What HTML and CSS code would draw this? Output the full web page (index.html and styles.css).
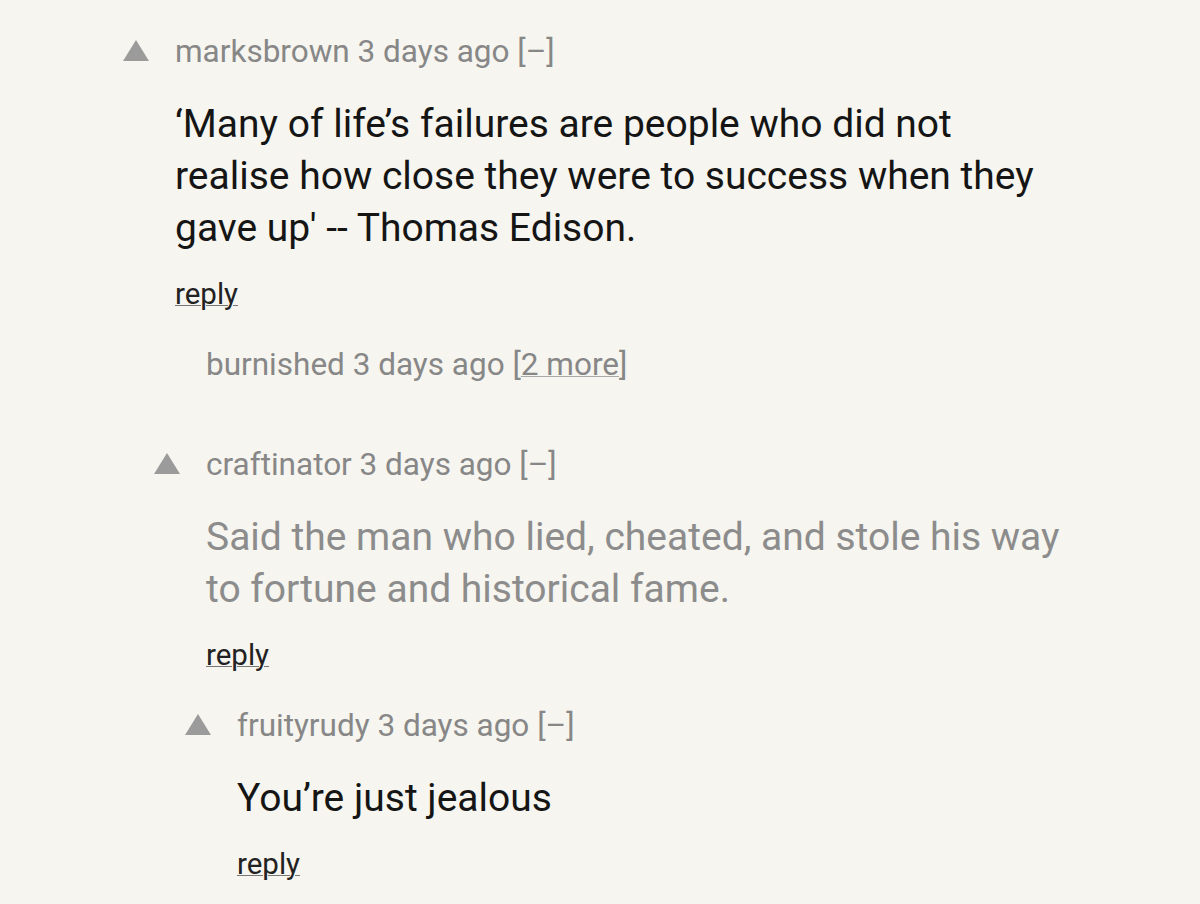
FILE: index.html
```html
<!DOCTYPE html>
<html>
<head>
<meta charset="utf-8">
<link rel="stylesheet" href="styles.css">
</head>
<body>
<div class="thread">
  <div class="comment lvl0">
    <div class="head"><span class="vote"></span><span class="meta">marksbrown 3 days ago [–]</span></div>
    <div class="text">‘Many of life’s failures are people who did not realise how close they were to success when they gave up' -- Thomas Edison.</div>
    <div class="reply"><a>reply</a></div>
  </div>
  <div class="comment lvl1 collapsed">
    <div class="head"><span class="novote"></span><span class="meta">burnished 3 days ago [<a>2 more</a>]</span></div>
  </div>
  <div class="comment lvl1">
    <div class="head"><span class="vote"></span><span class="meta">craftinator 3 days ago [–]</span></div>
    <div class="text faded">Said the man who lied, cheated, and stole his way to fortune and historical fame.</div>
    <div class="reply"><a>reply</a></div>
  </div>
  <div class="comment lvl2">
    <div class="head"><span class="vote"></span><span class="meta">fruityrudy 3 days ago [–]</span></div>
    <div class="text">You’re just jealous</div>
    <div class="reply"><a>reply</a></div>
  </div>
</div>
</body>
</html>
```
FILE: styles.css
```css
html, body {
  margin: 0;
  padding: 0;
  background: #f6f5ef;
}
body {
  font-family: Roboto, "Noto Sans", sans-serif;
  width: 1200px;
  height: 904px;
  overflow: hidden;
}
.thread {
  padding: 30px 132px 0 123px;
}
.comment {
  display: flex;
  flex-direction: column;
}
.lvl1 { margin-left: 31px; }
.lvl2 { margin-left: 62px; }
.head {
  display: flex;
  align-items: center;
  height: 42px;
}
.vote {
  flex: none;
  width: 0;
  height: 0;
  border-left: 13px solid transparent;
  border-right: 13px solid transparent;
  border-bottom: 21px solid #9b9b9b;
  margin-right: 26px;
  margin-top: -2px;
}
.novote {
  flex: none;
  width: 26px;
  margin-right: 26px;
}
.meta {
  font-size: 31.5px;
  color: #878787;
  white-space: nowrap;
}
.meta a {
  color: #878787;
  text-decoration: underline;
  text-decoration-color: #aaa;
  text-decoration-thickness: 1px;
}
.text {
  margin-left: 52px;
  margin-top: 26px;
  font-size: 39px;
  line-height: 52px;
  color: #151515;
}
.text.faded {
  color: #8c8c8c;
}
.reply {
  margin-left: 52px;
  margin-top: 23px;
  font-size: 29.5px;
  line-height: 34px;
  height: 66px;
}
.reply a {
  color: #222;
  text-decoration: underline;
  text-decoration-color: #777;
  text-decoration-thickness: 1px;
}
.collapsed {
  margin-bottom: 58px;
}
```
